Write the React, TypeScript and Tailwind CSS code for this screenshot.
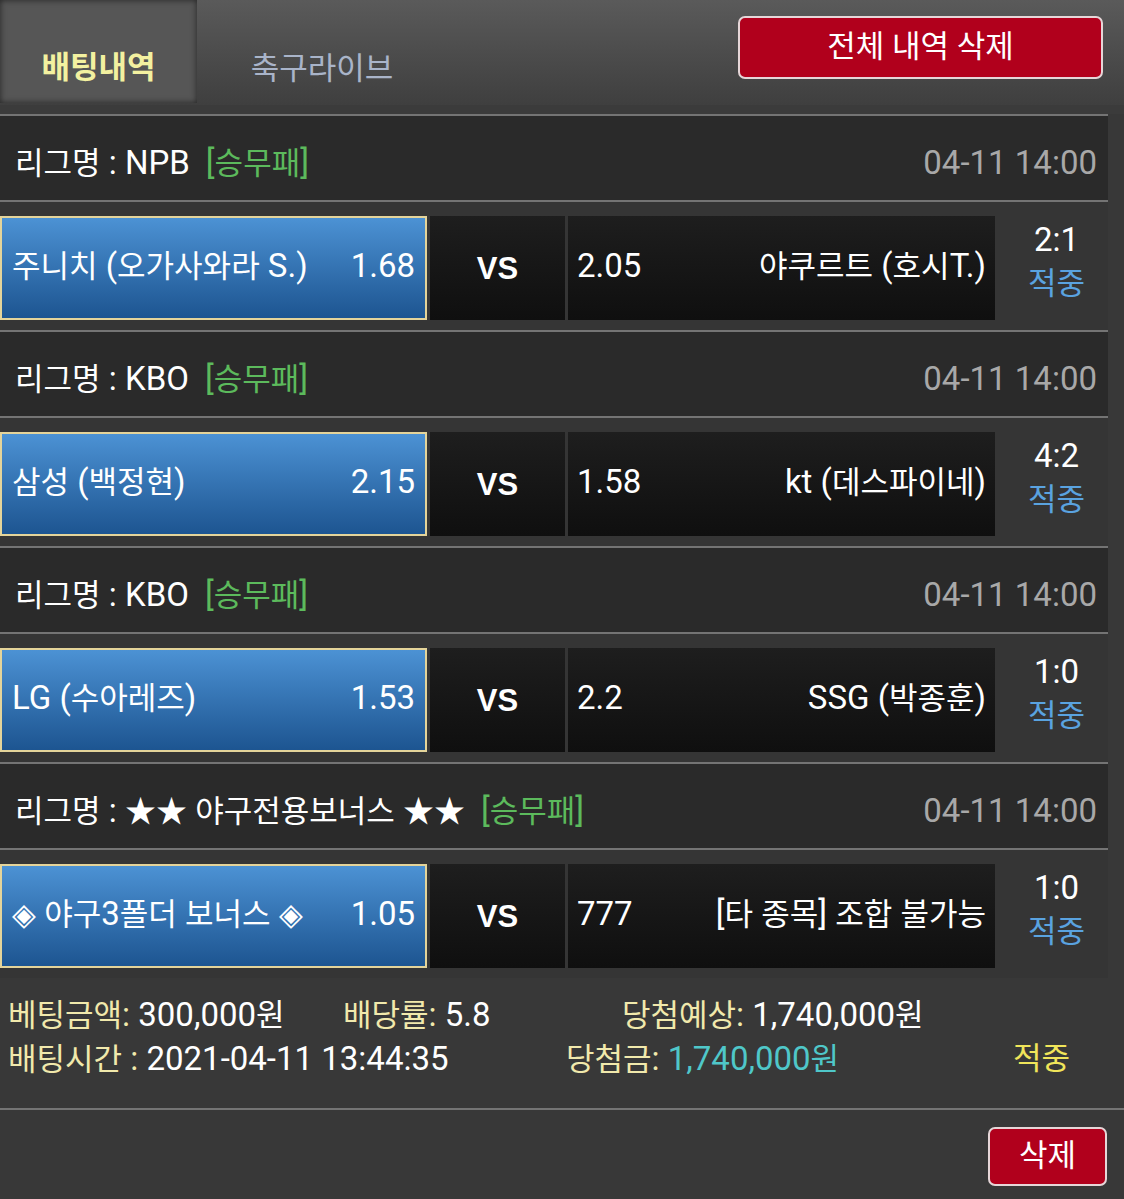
import React from 'react';

type Bet = {
  league: string;
  date: string;
  home: string;
  homeOdds: string;
  awayOdds: string;
  away: string;
  score: string;
};

const bets: Bet[] = [
  { league: 'NPB', date: '04-11 14:00', home: '주니치 (오가사와라 S.)', homeOdds: '1.68', awayOdds: '2.05', away: '야쿠르트 (호시T.)', score: '2:1' },
  { league: 'KBO', date: '04-11 14:00', home: '삼성 (백정현)', homeOdds: '2.15', awayOdds: '1.58', away: 'kt (데스파이네)', score: '4:2' },
  { league: 'KBO', date: '04-11 14:00', home: 'LG (수아레즈)', homeOdds: '1.53', awayOdds: '2.2', away: 'SSG (박종훈)', score: '1:0' },
  { league: '★★ 야구전용보너스 ★★', date: '04-11 14:00', home: '◈ 야구3폴더 보너스 ◈', homeOdds: '1.05', awayOdds: '777', away: '[타 종목] 조합 불가능', score: '1:0' }
];

// latin/digits render a bit larger than hangul in the screenshot
function Txt({ s }: { s: string }) {
  const parts = s.split(/([가-힣★◈]+)/);
  return (
    <>
      {parts.map((p, i) =>
        /[가-힣★◈]/.test(p) ? (
          <span key={i} className="text-[31px]">{p}</span>
        ) : (
          <span key={i} className="text-[33px]">{p}</span>
        )
      )}
    </>
  );
}

function BetBlock({ bet }: { bet: Bet }) {
  return (
    <div>
      <div className="h-[2px] bg-[#747474]" />
      <div className="h-[84px] bg-[#2a2a2a] flex items-center justify-between pl-[15px] pr-[11px] pt-[8px] leading-none">
        <div className="text-white">
          <Txt s={`리그명 : ${bet.league}`} />
          <span className="ml-[16px] text-[#5cba5c]"><Txt s="[승무패]" /></span>
        </div>
        <div className="text-[33px] text-[#a8a8a8]">{bet.date}</div>
      </div>
      <div className="h-[2px] bg-[#747474]" />
      <div className="h-[128px] bg-[#353535] flex pt-[14px] pb-[10px]">
        <div className="w-[427px] flex items-center justify-between px-[10px] pb-[4px] border-2 border-[#e4d49a] bg-gradient-to-b from-[#4c92d4] to-[#1d5591] text-white">
          <span><Txt s={bet.home} /></span>
          <span className="text-[33px]">{bet.homeOdds}</span>
        </div>
        <div className="w-[135px] ml-[3px] flex items-center justify-center bg-gradient-to-b from-[#1e1e1e] to-[#0f0f0f] text-[31px] font-bold text-white pt-[2px] font-['Liberation_Sans',Arial,sans-serif]">
          VS
        </div>
        <div className="w-[427px] ml-[3px] flex items-center justify-between pl-[9px] pr-[9px] pb-[4px] bg-gradient-to-b from-[#1e1e1e] to-[#0f0f0f] text-white">
          <span className="text-[33px]">{bet.awayOdds}</span>
          <span><Txt s={bet.away} /></span>
        </div>
        <div className="flex-1 flex flex-col items-center justify-center -mt-[12px] pl-[10px] leading-[44px]">
          <span className="text-[33px] text-white">{bet.score}</span>
          <span className="text-[31px] text-[#5aa3e0]">적중</span>
        </div>
      </div>
    </div>
  );
}

export default function App() {
  return (
    <div
      className="w-[1124px] min-h-[1199px] bg-[#383838] overflow-hidden"
      style={{ fontFamily: "Roboto, 'Noto Sans CJK KR', sans-serif" }}
    >
      <div className="h-[105px] bg-gradient-to-b from-[#5a5a5a] to-[#3f3f3f] flex">
        <div className="w-[197px] h-[103px] bg-[#565656] shadow-[inset_0_0_6px_rgba(0,0,0,0.6)] flex items-center justify-center pt-[34px] text-[31px] font-bold text-[#f3f1a0]">
          배팅내역
        </div>
        <div className="w-[250px] flex items-center justify-center pt-[34px] text-[31px] text-[#a9b4c9]">
          축구라이브
        </div>
        <button className="ml-auto mt-[16px] mr-[21px] w-[365px] h-[63px] rounded-[7px] border-2 border-[#e6d6d8] bg-[#b1001c] text-[31px] text-white">
          전체 내역 삭제
        </button>
      </div>
      <div className="h-[9px] bg-[#3b3b3b]" />
      <div className="w-[1108px]">
        {bets.map((bet, i) => (
          <BetBlock key={i} bet={bet} />
        ))}
        <div className="h-[130px] bg-[#383838] pt-[14px] leading-none">
          <div className="flex items-center h-[44px]">
            <span className="w-[343px] pl-[8px]">
              <span className="text-[#f1e9ac]"><Txt s="베팅금액: " /></span>
              <span className="text-white"><Txt s="300,000원" /></span>
            </span>
            <span className="w-[279px]">
              <span className="text-[#f1e9ac]"><Txt s="배당률: " /></span>
              <span className="text-white text-[33px]">5.8</span>
            </span>
            <span>
              <span className="text-[#f1e9ac]"><Txt s="당첨예상: " /></span>
              <span className="text-white"><Txt s="1,740,000원" /></span>
            </span>
          </div>
          <div className="flex items-center h-[44px]">
            <span className="w-[566px] pl-[8px]">
              <span className="text-[#f1e9ac]"><Txt s="배팅시간 : " /></span>
              <span className="text-white text-[33px]">2021-04-11 13:44:35</span>
            </span>
            <span className="w-[447px]">
              <span className="text-[#f1e9ac]"><Txt s="당첨금: " /></span>
              <span className="text-[#4fc7c9]"><Txt s="1,740,000원" /></span>
            </span>
            <span className="text-[31px] text-[#f0e55a]">적중</span>
          </div>
        </div>
      </div>
      <div className="h-[2px] bg-[#747474]" />
      <div className="flex justify-end pt-[17px] pr-[17px]">
        <button className="w-[119px] h-[59px] rounded-[7px] border-2 border-[#e6d6d8] bg-[#b1001c] text-[31px] text-white">
          삭제
        </button>
      </div>
    </div>
  );
}
